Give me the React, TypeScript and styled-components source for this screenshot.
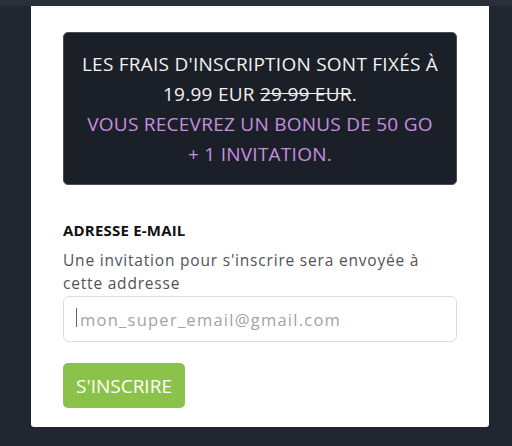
import React from "react";
import styled, { createGlobalStyle } from "styled-components";

const Global = createGlobalStyle`
  html, body { margin: 0; padding: 0; background: #212630; }
  body { font-family: "Open Sans", "Liberation Sans", sans-serif; }
  * { box-sizing: border-box; }
`;

const Page = styled.div`
  width: 512px;
  height: 446px;
  display: flex;
  flex-direction: column;
  background: #212630;
`;

const TopStrip = styled.div`
  height: 6px;
  background: #2a2f3a;
`;

const Card = styled.div`
  margin: 0 23px 0 31px;
  width: 458px;
  height: 421px;
  background: #ffffff;
  border-radius: 0 0 3px 3px;
  padding: 26px 32px 0 32px;
  display: flex;
  flex-direction: column;
`;

const Promo = styled.div`
  height: 153px;
  background: #1b1f27;
  border: 1px solid #4a4d53;
  border-radius: 5px;
  padding: 16px 4px;
  text-align: center;
  font-size: 19px;
  letter-spacing: 0.25px;
  line-height: 30px;
  color: #f2f2f2;
  text-transform: uppercase;
`;

const Line = styled.div<{ $accent?: boolean }>`
  color: ${(p) => (p.$accent ? "#c78ee0" : "#f2f2f2")};
  white-space: nowrap;
`;

const Strike = styled.span`
  text-decoration: line-through;
`;

const Label = styled.div`
  margin-top: 36px;
  font-size: 15px;
  font-weight: 700;
  color: #111;
  line-height: 18px;
  letter-spacing: 0.2px;
`;

const Desc = styled.div`
  margin-top: 10px;
  font-size: 15.5px;
  line-height: 23px;
  color: #505257;
  letter-spacing: 0.8px;
`;

const InputWrap = styled.div`
  position: relative;
  margin-top: 1px;
`;

const Input = styled.input`
  width: 100%;
  height: 46px;
  border: 1px solid #dcdcdc;
  border-radius: 6px;
  padding: 0 16px;
  font-family: "Open Sans", "Liberation Sans", sans-serif;
  font-size: 16.5px;
  letter-spacing: 1.25px;
  color: #333;
  outline: none;
  &::placeholder { color: #a3a3a3; }
`;

const Caret = styled.span`
  position: absolute;
  left: 13px;
  top: 12px;
  width: 1px;
  height: 19px;
  background: #666;
`;

const Button = styled.button`
  margin-top: 21px;
  width: 122px;
  height: 45px;
  border: none;
  border-radius: 5px;
  background: #8bc34a;
  color: #ffffff;
  font-family: "Open Sans", "Liberation Sans", sans-serif;
  font-size: 19px;
  padding: 0;
  text-transform: uppercase;
`;

export default function App() {
  return (
    <>
      <Global />
      <Page>
        <TopStrip />
        <Card>
          <Promo>
            <Line>Les frais d'inscription sont fixés à</Line>
            <Line>
              19.99 EUR <Strike>29.99 EUR</Strike>.
            </Line>
            <Line $accent>Vous recevrez un bonus de 50 Go</Line>
            <Line $accent>+ 1 invitation.</Line>
          </Promo>
          <Label>ADRESSE E-MAIL</Label>
          <Desc>Une invitation pour s'inscrire sera envoyée à cette addresse</Desc>
          <InputWrap>
            <Input type="email" placeholder="mon_super_email@gmail.com" />
            <Caret />
          </InputWrap>
          <Button>S'inscrire</Button>
        </Card>
      </Page>
    </>
  );
}
